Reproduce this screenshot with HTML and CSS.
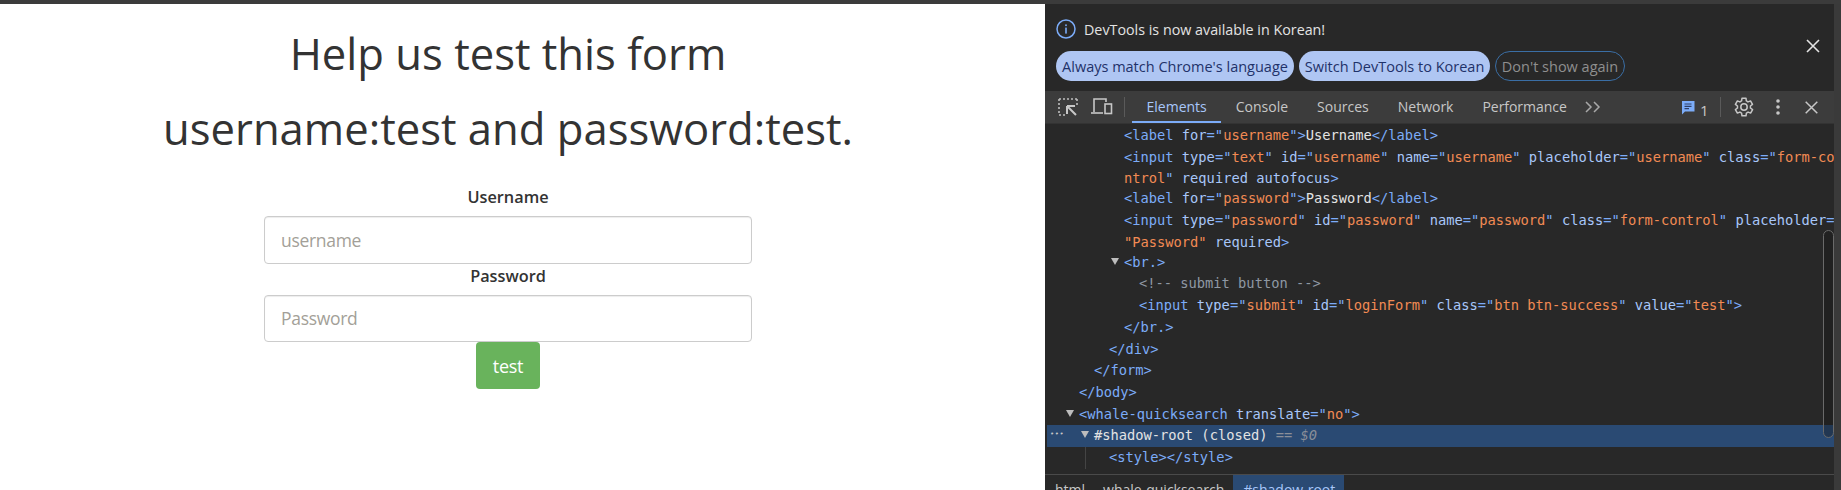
FILE: index.html
```html
<!DOCTYPE html>
<html lang="en">
<head>
<meta charset="utf-8">
<title>Help us test this form</title>
<link rel="stylesheet" href="styles.css">
</head>
<body>
<div class="topbar"></div>
<div class="split">
  <main class="page">
    <h1>Help us test this form</h1>
    <h1>username:test and password:test.</h1>
    <form class="form">
      <label class="lab" for="u">Username</label>
      <input class="ctl" id="u" type="text" placeholder="username">
      <label class="lab" for="p">Password</label>
      <input class="ctl" id="p" type="password" placeholder="Password">
      <button class="btn" type="button">test</button>
    </form>
  </main>
  <aside class="dt">
    <div class="dt-main">
      <div class="infobar">
        <div class="info-line">
          <svg class="info-ico" width="20" height="20" viewBox="0 0 20 20"><circle cx="10" cy="10" r="9" fill="none" stroke="#7cacf8" stroke-width="1.5"/><rect x="9.2" y="8.6" width="1.6" height="6" fill="#7cacf8"/><rect x="9.2" y="5.4" width="1.6" height="1.7" fill="#7cacf8"/></svg>
          <span>DevTools is now available in Korean!</span>
        </div>
        <div class="chips">
          <span class="chip c1">Always match Chrome's language</span>
          <span class="chip c2">Switch DevTools to Korean</span>
          <span class="chip ghost">Don't show again</span>
        </div>
        <svg class="info-x" width="14" height="14" viewBox="0 0 14 14"><path d="M1 1l12 12M13 1L1 13" stroke="#e3e3e3" stroke-width="1.6" fill="none"/></svg>
      </div>
      <div class="toolbar">
        <svg class="tb-ico first" width="20" height="20" viewBox="0 0 20 20"><path d="M1 2h2M5 2h2M9 2h2M13 2h2M17 2h2M1 2v2M1 6v2M1 10v2M1 14v2M1 18h2M5 18h2M19 2v2M19 6v2" stroke="#bdbdbd" stroke-width="1.6" fill="none"/><path d="M9 9h8M9 9v8M9.5 9.5L18 18" stroke="#c7c7c7" stroke-width="2" fill="none"/></svg>
        <svg class="tb-ico" width="22" height="20" viewBox="0 0 22 20"><path d="M3 15V2h12v3" stroke="#c7c7c7" stroke-width="1.6" fill="none"/><path d="M0 16h12" stroke="#c7c7c7" stroke-width="1.6" fill="none"/><rect x="14" y="7" width="6.5" height="9.5" fill="none" stroke="#c7c7c7" stroke-width="1.6"/></svg>
        <span class="vsep"></span>
        <nav class="tabs">
          <span class="tab on">Elements</span>
          <span class="tab">Console</span>
          <span class="tab">Sources</span>
          <span class="tab">Network</span>
          <span class="tab">Performance</span>
        </nav>
        <svg class="more" width="16" height="12" viewBox="0 0 16 12"><path d="M1 1l5 5-5 5M9 1l5 5-5 5" stroke="#a8a8a8" stroke-width="1.5" fill="none"/></svg>
        <span class="spacer"></span>
        <svg class="msg" width="14" height="15" viewBox="0 0 14 15"><path d="M1 1h12.500v10.500H4L1 14.500z" fill="#7cacf8"/><path d="M3.500 4h7M3.500 6.300h7M3.500 8.600h4.500" stroke="#2f3f66" stroke-width="1.200"/></svg>
        <span class="count">1</span>
        <span class="vsep two"></span>
        <svg class="gear" width="24" height="24" viewBox="0 0 24 24"><path d="M19.400 13a7.500 7.500 0 0 0 0-2l2.100-1.600-2-3.500-2.500 1a7.500 7.500 0 0 0-1.700-1L15 3.200h-4l-.4 2.700a7.500 7.500 0 0 0-1.700 1l-2.500-1-2 3.500L6.500 11a7.500 7.500 0 0 0 0 2l-2.100 1.600 2 3.500 2.500-1a7.500 7.500 0 0 0 1.700 1l.4 2.700h4l.4-2.700a7.500 7.500 0 0 0 1.700-1l2.500 1 2-3.500z" transform="translate(-1 0)" fill="none" stroke="#c7c7c7" stroke-width="1.500" stroke-linejoin="round"/><circle cx="12" cy="12" r="3.200" fill="none" stroke="#c7c7c7" stroke-width="1.500"/></svg>
        <svg class="dots" width="4" height="16" viewBox="0 0 4 16"><circle cx="2" cy="2" r="1.800" fill="#c7c7c7"/><circle cx="2" cy="8" r="1.800" fill="#c7c7c7"/><circle cx="2" cy="14" r="1.800" fill="#c7c7c7"/></svg>
        <svg class="close" width="13" height="13" viewBox="0 0 13 13"><path d="M.7.7l11.600 11.600M12.300.7L.7 12.300" stroke="#c7c7c7" stroke-width="1.500" fill="none"/></svg>
      </div>
      <div class="tree">
        <div class="row i3"><b>&lt;label</b> <i>for</i><b>="</b><u>username</u><b>"&gt;</b><em>Username</em><b>&lt;/label&gt;</b></div>
        <div class="row i3"><b>&lt;input</b> <i>type</i><b>="</b><u>text</u><b>"</b> <i>id</i><b>="</b><u>username</u><b>"</b> <i>name</i><b>="</b><u>username</u><b>"</b> <i>placeholder</i><b>="</b><u>username</u><b>"</b> <i>class</i><b>="</b><u>form-co</u></div>
        <div class="row i3 cont"><u>ntrol</u><b>"</b> <i>required autofocus</i><b>&gt;</b></div>
        <div class="row i3"><b>&lt;label</b> <i>for</i><b>="</b><u>password</u><b>"&gt;</b><em>Password</em><b>&lt;/label&gt;</b></div>
        <div class="row i3"><b>&lt;input</b> <i>type</i><b>="</b><u>password</u><b>"</b> <i>id</i><b>="</b><u>password</u><b>"</b> <i>name</i><b>="</b><u>password</u><b>"</b> <i>class</i><b>="</b><u>form-control</u><b>"</b> <i>placeholder</i><b>=</b></div>
        <div class="row i3 cont"><u>"Password"</u> <i>required</i><b>&gt;</b></div>
        <div class="row i3 open"><b>&lt;br.&gt;</b></div>
        <div class="row i4 cm">&lt;!-- submit button --&gt;</div>
        <div class="row i4"><b>&lt;input</b> <i>type</i><b>="</b><u>submit</u><b>"</b> <i>id</i><b>="</b><u>loginForm</u><b>"</b> <i>class</i><b>="</b><u>btn btn-success</u><b>"</b> <i>value</i><b>="</b><u>test</u><b>"&gt;</b></div>
        <div class="row i3"><b>&lt;/br.&gt;</b></div>
        <div class="row i2"><b>&lt;/div&gt;</b></div>
        <div class="row i1"><b>&lt;/form&gt;</b></div>
        <div class="row i0"><b>&lt;/body&gt;</b></div>
        <div class="row i0 open"><b>&lt;whale-quicksearch</b> <i>translate</i><b>="</b><u>no</u><b>"&gt;</b></div>
        <div class="row i1 open sel"><span class="more-dots">•••</span><em>#shadow-root (closed)</em> <span class="eq">==</span> <span class="dollar">$0</span></div>
        <div class="row i2 guide"><b>&lt;style&gt;&lt;/style&gt;</b></div>
        <div class="scroll"></div>
      </div>
      <div class="crumbs">
        <span class="crumb">html</span>
        <span class="crumb">whale-quicksearch</span>
        <span class="crumb cur">#shadow-root</span>
      </div>
    </div>
    <div class="dt-edge"></div>
  </aside>
</div>
</body>
</html>
```
FILE: styles.css
```css
* { box-sizing: border-box; }
html, body { margin: 0; height: 490px; overflow: hidden; }
body { display: flex; flex-direction: column; background: #fff; }
.topbar { height: 4px; background: #3b3b3b; flex: none; }
.split { flex: 1; display: flex; min-height: 0; }

.page { width: 1045px; flex: none; padding: 12px 29px 0 0; display: flex; flex-direction: column; align-items: center; font-family: "Open Sans", sans-serif; color: #333; }
h1 { margin: 0; font-size: 43.6px; font-weight: 400; line-height: 75px; white-space: nowrap; }
.form { width: 488px; margin-top: 22px; display: flex; flex-direction: column; align-items: center; }
.lab { font-size: 16.3px; line-height: 18px; font-weight: 600; height: 28px; }
.ctl { width: 488px; height: 47.5px; flex: none; border: 1px solid #ccc; border-radius: 4px; padding: 0 16px; font: 400 17.500px "Open Sans", sans-serif; letter-spacing: -.3px; box-shadow: inset 0 1px 1px rgba(0,0,0,.075); color: #555; }
.ctl::placeholder { color: #a39f98; opacity: 1; }
.ctl + .lab { margin-top: 2px; height: 29px; line-height: 20px; }
.btn { width: 64px; height: 47px; flex: none; border: 0; border-radius: 4px; background: #69b35c; color: #fff; font: 400 18px "Open Sans", sans-serif; letter-spacing: -.3px; padding: 0; }

.dt { flex: 1; min-width: 0; display: flex; background: #282828; }
.dt-main { flex: 1; min-width: 0; display: flex; flex-direction: column; font-family: "Open Sans", sans-serif; }
.dt-edge { width: 7px; flex: none; background: #3a3a3a; }

.infobar { height: 87px; flex: none; position: relative; padding: 15px 0 0 11px; color: #e3e3e3; font-size: 14.3px; }
.info-line { display: flex; align-items: center; gap: 8px; height: 20px; }
.info-ico { flex: none; }
.chips { display: flex; gap: 5px; margin-top: 12px; }
.chip { height: 30px; border-radius: 15px; display: flex; align-items: center; justify-content: center; font-size: 14.5px; white-space: nowrap; background: #afc6f3; color: #1f3269; }
.c1 { width: 238px; }
.c2 { width: 191px; }
.ghost { width: 130px; background: none; border: 1px solid #3a6ea5; color: #8f8f8f; }
.info-x { position: absolute; left: 761px; top: 35px; }

.toolbar { height: 33px; flex: none; background: #3c3c3c; display: flex; align-items: center; border-bottom: 1px solid #333; color: #c7c7c7; font-size: 14px; }
.tb-ico { flex: none; }
.tb-ico.first { margin-left: 13px; margin-right: 13px; }
.vsep { width: 1px; height: 20px; background: #5a5a5a; margin-left: 11px; flex: none; }
.tabs { display: flex; margin-left: 7px; height: 32px; }
.tab { padding: 0 14.500px; line-height: 31px; white-space: nowrap; }
.tab.on { color: #a8c7fa; border-bottom: 2px solid #7cacf8; }
.tab:last-child { padding-right: 13px; letter-spacing: -.05px; }
.more { flex: none; margin-left: 5px; }
.spacer { flex: 1; }
.msg { flex: none; }
.count { margin-left: 5px; font-size: 15px; width: 9px; padding-top: 6px; }
.vsep.two { margin-left: 11px; }
.gear { flex: none; margin-left: 11px; }
.dots { flex: none; margin-left: 20px; }
.close { flex: none; margin-left: 25px; margin-right: 16px; }

.tree { flex: 1; min-height: 0; position: relative; overflow: hidden; padding-top: 1px; font-family: "DejaVu Sans Mono", monospace; font-size: 13.72px; color: #7cacf8; }
.row { height: 21.700px; line-height: 21.700px; white-space: pre; overflow: hidden; position: relative; }
.row b, .row i, .row u, .row em { font-weight: 400; font-style: normal; text-decoration: none; }
.row b { color: #7cacf8; }
.row i { color: #a8c7fa; }
.row u { color: #f28b54; }
.row em { color: #e3e3e3; }
.i0 { padding-left: 34px; }
.i1 { padding-left: 49px; }
.i2 { padding-left: 64px; }
.i3 { padding-left: 79px; }
.i4 { padding-left: 94px; }
.cont { height: 20px; line-height: 20px; }
.cm { color: #8f98a3; }
.open::before { content: ""; position: absolute; top: 6px; margin-left: -13px; border-left: 4.5px solid transparent; border-right: 4.5px solid transparent; border-top: 7.5px solid #bdbdbd; }
.sel { background: #2a4a73; margin-left: 2px; padding-left: 47px; }
.more-dots { position: absolute; left: 3px; top: -1px; font-size: 7px; color: #c7c7c7; letter-spacing: .5px; }
.eq { color: #8a8f99; }
.dollar { color: #8a8f99; font-style: italic; }
.guide::before { content: ""; position: absolute; left: 40px; top: 0; bottom: 0; width: 1px; background: #444; }
.scroll { position: absolute; right: 0; top: 106px; width: 11px; height: 208px; border: 1px solid #6a6a6a; border-radius: 6px; background: rgba(20,20,20,.35); }

.crumbs { height: 16px; flex: none; border-top: 1px solid #4a4a4a; display: flex; font-size: 14px; color: #c7c7c7; padding-left: 1px; line-height: 30px; overflow: hidden; }
.crumb { padding: 0 9px; white-space: nowrap; }
.cur { background: #2a4a73; color: #a8c7fa; padding-left: 10px; }
```
